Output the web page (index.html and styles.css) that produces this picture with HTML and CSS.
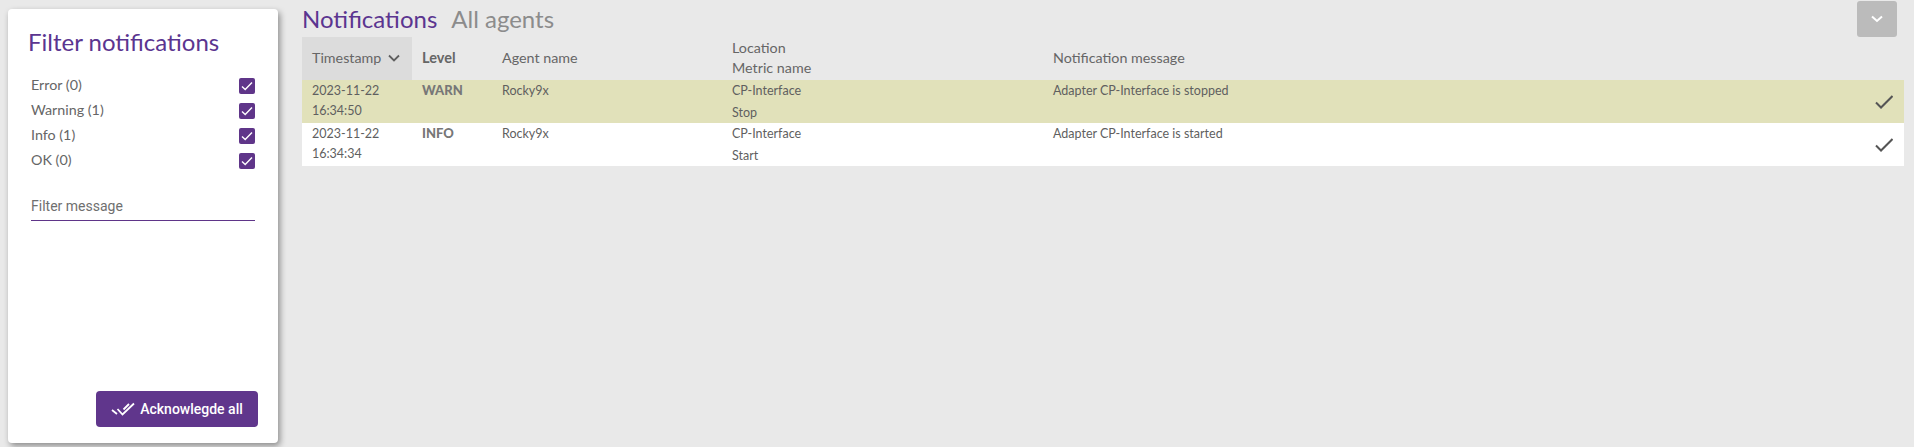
FILE: index.html
```html
<!DOCTYPE html>
<html lang="en">
<head>
<meta charset="utf-8">
<title>Notifications</title>
<link rel="stylesheet" href="styles.css">
</head>
<body>
<div class="page">
  <aside class="filter-card">
    <h2 class="filter-title">Filter notifications</h2>
    <ul class="check-list">
      <li class="check-row"><span class="check-label">Error (0)</span><span class="box"><svg viewBox="0 0 16 16"><path d="M3 8.500l3.200 3L13 4.500"/></svg></span></li>
      <li class="check-row"><span class="check-label">Warning (1)</span><span class="box"><svg viewBox="0 0 16 16"><path d="M3 8.500l3.200 3L13 4.500"/></svg></span></li>
      <li class="check-row"><span class="check-label">Info (1)</span><span class="box"><svg viewBox="0 0 16 16"><path d="M3 8.500l3.200 3L13 4.500"/></svg></span></li>
      <li class="check-row"><span class="check-label">OK (0)</span><span class="box"><svg viewBox="0 0 16 16"><path d="M3 8.500l3.200 3L13 4.500"/></svg></span></li>
    </ul>
    <div class="filter-input">Filter message</div>
    <div class="card-foot">
      <button class="ack-btn">
        <svg class="ack-icon" viewBox="0 0 24 14"><path d="M1 8l5 4M6.500 7l5 5.500L23 1.500M12.500 7.500L18 2"/></svg>
        Acknowlegde all
      </button>
    </div>
  </aside>
  <main class="content">
    <header class="topbar">
      <h1 class="title"><span class="title-main">Notifications</span><span class="title-sub">All agents</span></h1>
      <button class="collapse-btn"><svg viewBox="0 0 14 10"><path d="M2 2.500L7 7l5-4.500"/></svg></button>
    </header>
    <table class="grid">
      <thead>
        <tr>
          <th class="col-time sorted"><span class="sort-label">Timestamp<svg class="sort-icon" viewBox="0 0 14 10"><path d="M2 2.500L7 7.500l5-5"/></svg></span></th>
          <th class="col-level level-head">Level</th>
          <th class="col-agent">Agent name</th>
          <th class="col-loc">Location<br>Metric name</th>
          <th class="col-msg">Notification message</th>
          <th class="col-ack"></th>
        </tr>
      </thead>
      <tbody>
        <tr class="row-warn">
          <td class="time">2023-11-22<br>16:34:50</td>
          <td class="level">WARN</td>
          <td>Rocky9x</td>
          <td>CP-Interface<br>Stop</td>
          <td>Adapter CP-Interface is stopped</td>
          <td class="ack"><svg viewBox="0 0 18 14"><path d="M1 7.500l5 5L17.500 1"/></svg></td>
        </tr>
        <tr class="row-info">
          <td class="time">2023-11-22<br>16:34:34</td>
          <td class="level">INFO</td>
          <td>Rocky9x</td>
          <td>CP-Interface<br>Start</td>
          <td>Adapter CP-Interface is started</td>
          <td class="ack"><svg viewBox="0 0 18 14"><path d="M1 7.500l5 5L17.500 1"/></svg></td>
        </tr>
      </tbody>
    </table>
  </main>
</div>
</body>
</html>
```
FILE: styles.css
```css
* { box-sizing: border-box; }
html, body { margin: 0; height: 100%; }
body {
  background: #e9e9e9;
  color: #5f5f5f;
  font-family: "Lato", "Liberation Sans", sans-serif;
  overflow: hidden;
}
.page {
  display: flex;
  height: 447px;
  padding: 9px 10px 4px 8px;
  gap: 24px;
}
.filter-card {
  width: 270px;
  flex: none;
  display: flex;
  flex-direction: column;
  background: #fff;
  border-radius: 4px;
  box-shadow: 2px 3px 6px rgba(0, 0, 0, 0.4);
  padding: 17px 20px 16px 20px;
}
.filter-title {
  margin: 0;
  font-size: 24px;
  line-height: 32px;
  font-weight: 400;
  color: #5b3590;
}
.check-list {
  list-style: none;
  margin: 15.500px 3px 0 3px;
  padding: 0;
}
.check-row {
  display: flex;
  justify-content: space-between;
  align-items: center;
  height: 25px;
  font-size: 14.300px;
  color: #666;
}
.check-label { padding-bottom: 4px; }
.box {
  width: 16px;
  height: 16px;
  background: #5f3589;
  border-radius: 2px;
  display: flex;
}
.box svg { width: 16px; height: 16px; }
.box path { fill: none; stroke: #fff; stroke-width: 1.4; }
.filter-input {
  margin: 18.500px 3px 0 3px;
  height: 29px;
  line-height: 29px;
  font-family: "Roboto", sans-serif;
  font-size: 14px;
  color: #6f6f6f;
  border-bottom: 1px solid #5f3589;
}
.card-foot {
  margin-top: auto;
  display: flex;
  justify-content: flex-end;
}
.ack-btn {
  display: flex;
  align-items: center;
  justify-content: center;
  gap: 5px;
  width: 162px;
  height: 36px;
  border: 0;
  border-radius: 4px;
  background: #60368c;
  color: #fff;
  font-family: "Roboto", sans-serif;
  font-size: 14px;
  font-weight: 500;
  padding: 0;
}
.ack-icon { width: 24px; height: 14px; }
.ack-icon path { fill: none; stroke: #fff; stroke-width: 1.8; }
.content { flex: 1; min-width: 0; }
.topbar {
  display: flex;
  justify-content: space-between;
  align-items: flex-start;
  height: 28px;
  margin-top: -9px;
}
.title {
  margin: 4px 0 0 0;
  font-size: 24px;
  line-height: 30px;
  font-weight: 400;
}
.title-main { color: #5b3590; margin-right: 14px; }
.title-sub { color: #8c8c8c; }
.collapse-btn {
  width: 40px;
  height: 36px;
  margin: 1px 7px 0 0;
  border: 0;
  border-radius: 3px;
  background: #bbb;
  padding: 0;
  display: flex;
  align-items: center;
  justify-content: center;
}
.collapse-btn svg { width: 14px; height: 10px; }
.collapse-btn path { fill: none; stroke: #fff; stroke-width: 2; }
.grid {
  width: 1602px;
  margin-top: 9px;
  border-collapse: collapse;
  table-layout: fixed;
  font-size: 12.500px;
}
.grid th {
  height: 43px;
  padding: 0 10px 2px;
  text-align: left;
  font-weight: 400;
  font-size: 14.300px;
  line-height: 20px;
  color: #666;
}
.grid th.sorted { background: #dcdcdc; }
.grid th.level-head { font-weight: 700; font-size: 14.500px; }
.sort-label { display: flex; align-items: center; gap: 6px; }
.sort-icon { width: 14px; height: 10px; }
.sort-icon path { fill: none; stroke: #5f5f5f; stroke-width: 1.8; }
.col-time { width: 110px; }
.col-level { width: 80px; }
.col-agent { width: 230px; }
.col-loc { width: 321px; }
.col-ack { width: 48px; }
.grid td {
  height: 43px;
  padding: 0 10px;
  vertical-align: top;
  line-height: 21.500px;
  color: #5f5f5f;
}
.grid td.time { line-height: 20px; padding-top: 1px; }
.grid td.level { font-weight: 900; font-size: 13px; color: #777; }
.row-warn { background: #e1e1ba; }
.row-info { background: #fff; }
.grid td.ack { padding: 0 11px 0 0; text-align: right; vertical-align: middle; line-height: 14px; }
.ack svg { width: 18px; height: 14px; display: inline-block; vertical-align: middle; }
.ack path { fill: none; stroke: #555; stroke-width: 2; }
```
